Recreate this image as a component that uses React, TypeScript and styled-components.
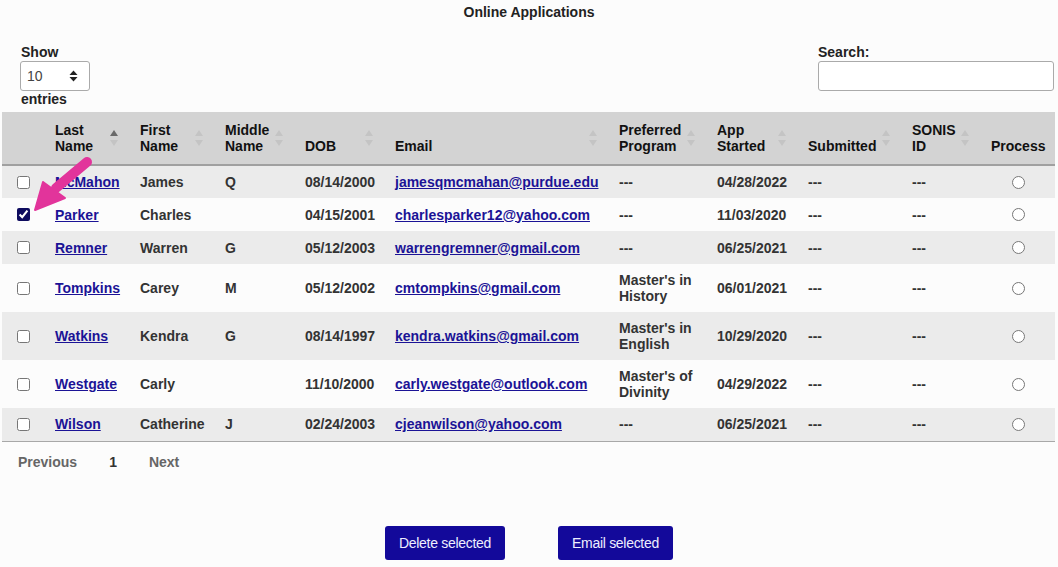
import React from "react";
import styled, { createGlobalStyle } from "styled-components";

const GlobalStyle = createGlobalStyle`
  html, body {
    margin: 0;
    padding: 0;
    background: #fcfcfc;
  }
  body {
    font-family: "Liberation Sans", Arial, sans-serif;
    font-size: 14px;
    color: #333;
  }
`;

type Applicant = {
  last: string
  first: string
  middle: string
  dob: string
  email: string
  program: string[]
  started: string
  checked?: boolean
}

const applicants: Applicant[] = [
  { last: "McMahon", first: "James", middle: "Q", dob: "08/14/2000", email: "jamesqmcmahan@purdue.edu", program: ["---"], started: "04/28/2022" },
  { last: "Parker", first: "Charles", middle: "", dob: "04/15/2001", email: "charlesparker12@yahoo.com", program: ["---"], started: "11/03/2020", checked: true },
  { last: "Remner", first: "Warren", middle: "G", dob: "05/12/2003", email: "warrengremner@gmail.com", program: ["---"], started: "06/25/2021" },
  { last: "Tompkins", first: "Carey", middle: "M", dob: "05/12/2002", email: "cmtompkins@gmail.com", program: ["Master's in", "History"], started: "06/01/2021" },
  { last: "Watkins", first: "Kendra", middle: "G", dob: "08/14/1997", email: "kendra.watkins@gmail.com", program: ["Master's in", "English"], started: "10/29/2020" },
  { last: "Westgate", first: "Carly", middle: "", dob: "11/10/2000", email: "carly.westgate@outlook.com", program: ["Master's of", "Divinity"], started: "04/29/2022" },
  { last: "Wilson", first: "Catherine", middle: "J", dob: "02/24/2003", email: "cjeanwilson@yahoo.com", program: ["---"], started: "06/25/2021" },
];

type Column = {
  label: string[]
  width: number
  sortable: boolean
  active?: boolean
  center?: boolean
}

const columns: Column[] = [
  { label: [""], width: 43, sortable: false, center: true },
  { label: ["Last", "Name"], width: 85, sortable: true, active: true },
  { label: ["First", "Name"], width: 85, sortable: true },
  { label: ["Middle", "Name"], width: 80, sortable: true },
  { label: ["DOB"], width: 90, sortable: true },
  { label: ["Email"], width: 224, sortable: true },
  { label: ["Preferred", "Program"], width: 98, sortable: true },
  { label: ["App", "Started"], width: 91, sortable: true },
  { label: ["Submitted"], width: 104, sortable: true },
  { label: ["SONIS", "ID"], width: 79, sortable: true },
  { label: ["Process"], width: 74, sortable: false, center: true },
];

const Lines: React.FC<{ lines: string[] }> = ({ lines }) => (
  <>
    {lines.map((l, j) => (
      <React.Fragment key={j}>
        {j > 0 && <br />}
        {l}
      </React.Fragment>
    ))}
  </>
);

export default function App() {
  return (
    <Page>
      <GlobalStyle />
      <Title>Online Applications</Title>

      <Controls>
        <LengthBlock>
          <Label>Show</Label>
          <SelectBox>
            <span>10</span>
            <svg width="9" height="12" viewBox="0 0 9 12">
              <path d="M4.5 0.5 L8.5 5 H0.5 Z" fill="#222" />
              <path d="M4.5 11.5 L8.5 7 H0.5 Z" fill="#222" />
            </svg>
          </SelectBox>
          <Label>entries</Label>
        </LengthBlock>
        <SearchBlock>
          <Label>Search:</Label>
          <SearchInput type="text" />
        </SearchBlock>
      </Controls>

      <Table>
        <colgroup>
          {columns.map((c, i) => (
            <col key={i} style={{ width: c.width }} />
          ))}
        </colgroup>
        <thead>
          <tr>
            {columns.map((c, i) => (
              <HeadCell key={i} $center={c.center}>
                <Lines lines={c.label} />
                {c.sortable && (
                  <SortIcon>
                    <SortUp $active={c.active} />
                    <SortDown />
                  </SortIcon>
                )}
              </HeadCell>
            ))}
          </tr>
        </thead>
        <tbody>
          {applicants.map((a, i) => (
            <Row key={a.last} $striped={i % 2 === 0}>
              <Cell $center>
                <Check type="checkbox" defaultChecked={a.checked} />
              </Cell>
              <Cell><NameLink href="#">{a.last}</NameLink></Cell>
              <Cell>{a.first}</Cell>
              <Cell>{a.middle}</Cell>
              <Cell>{a.dob}</Cell>
              <Cell><NameLink href="#">{a.email}</NameLink></Cell>
              <Cell><Lines lines={a.program} /></Cell>
              <Cell>{a.started}</Cell>
              <Cell>---</Cell>
              <Cell>---</Cell>
              <Cell $center>
                <Radio type="radio" name={`process-${i}`} />
              </Cell>
            </Row>
          ))}
        </tbody>
      </Table>

      <Pager>
        <PageButton $disabled>Previous</PageButton>
        <PageButton>1</PageButton>
        <PageButton $disabled>Next</PageButton>
      </Pager>

      <Actions>
        <ActionButton $width={120}>Delete selected</ActionButton>
        <ActionButton $width={115}>Email selected</ActionButton>
      </Actions>

      <Pointer width="90" height="80" viewBox="0 0 90 80">
        <line x1="77" y1="12" x2="46" y2="38" stroke="#e2349b" strokeWidth="10" strokeLinecap="round" />
        <polygon points="25,60 33,32 55,48" fill="#e2349b" stroke="#e2349b" strokeWidth="2" strokeLinejoin="round" />
      </Pointer>
    </Page>
  );
}

const Page = styled.div`
  position: relative;
  width: 1058px;
  height: 567px;
  padding-top: 4px;
  box-sizing: border-box;
  overflow: hidden;
`

const Title = styled.div`
  text-align: center;
  font-weight: bold;
  line-height: 16px;
  color: #222;
`

const Controls = styled.div`
  display: flex;
  justify-content: space-between;
  align-items: flex-start;
  margin-top: 24px;
  padding: 0 4px 0 20px;
`

const LengthBlock = styled.div`
  display: flex;
  flex-direction: column;
  align-items: flex-start;
`

const SearchBlock = styled.div`
  display: flex;
  flex-direction: column;
  align-items: flex-start;
`

const Label = styled.label`
  font-weight: bold;
  line-height: 16px;
  color: #222;
  padding-left: 1px;
`

const SelectBox = styled.div`
  display: flex;
  align-items: center;
  justify-content: space-between;
  width: 70px;
  height: 30px;
  margin-top: 1px;
  padding: 0 11px 0 6px;
  box-sizing: border-box;
  border: 1px solid #aaa;
  border-radius: 3px;
  background: #fff;
  color: #444;
  font-size: 14px;
`

const SearchInput = styled.input`
  width: 236px;
  height: 30px;
  margin: 1px 0 0 1px;
  box-sizing: border-box;
  border: 1px solid #aaa;
  border-radius: 3px;
  background: #fff;
  outline: none;
`

const Table = styled.table`
  width: 1053px;
  margin: 5px 2px 0;
  border-collapse: collapse;
  table-layout: fixed;
  border-bottom: 1px solid #a8a8a8;
`

const HeadCell = styled.th<{ $center?: boolean }>`
  position: relative;
  padding: 10px 10px;
  background: #d3d3d3;
  border-bottom: 2px solid #a0a0a0;
  color: #111;
  font-weight: bold;
  line-height: 16px;
  text-align: ${(p) => (p.$center ? "center" : "left")};
  vertical-align: bottom;
  white-space: nowrap;
`

const SortIcon = styled.span`
  position: absolute;
  right: 12px;
  top: 18px;
  display: flex;
  flex-direction: column;
  gap: 4px;
`

const SortUp = styled.span<{ $active?: boolean }>`
  width: 0;
  height: 0;
  border-left: 4px solid transparent;
  border-right: 4px solid transparent;
  border-bottom: 6px solid ${(p) => (p.$active ? "#6a6a6a" : "#c4c4c4")};
`

const SortDown = styled.span`
  width: 0;
  height: 0;
  border-left: 4px solid transparent;
  border-right: 4px solid transparent;
  border-top: 6px solid #c4c4c4;
`

const Row = styled.tr<{ $striped: boolean }>`
  height: 33px;
  background: ${(p) => (p.$striped ? "#ebebeb" : "#fcfcfc")};
`

const Cell = styled.td<{ $center?: boolean }>`
  padding: 8px 10px;
  line-height: 16px;
  font-weight: bold;
  color: #333;
  text-align: ${(p) => (p.$center ? "center" : "left")};
  vertical-align: middle;
  white-space: nowrap;
`

const NameLink = styled.a`
  color: #1b1396;
  text-decoration: underline;
`

const Check = styled.input`
  display: block;
  width: 13px;
  height: 13px;
  margin: 0 auto;
  accent-color: #0e0b5e;
`

const Radio = styled.input`
  display: block;
  width: 13px;
  height: 13px;
  margin: 0 auto;
`

const Pager = styled.div`
  display: flex;
  margin: 12px 0 0 2px;
`

const PageButton = styled.span<{ $disabled?: boolean }>`
  padding: 0 16px;
  line-height: 16px;
  font-weight: bold;
  color: ${(p) => (p.$disabled ? "#666" : "#333")};
`

const Actions = styled.div`
  display: flex;
  justify-content: center;
  gap: 53px;
  margin-top: 56px;
`

const ActionButton = styled.button<{ $width: number }>`
  width: ${(p) => p.$width}px;
  height: 34px;
  padding: 0;
  border: none;
  border-radius: 3px;
  background: #13099a;
  color: #eef;
  font-family: "Liberation Sans", Arial, sans-serif;
  font-size: 14px;
  letter-spacing: -0.3px;
`

const Pointer = styled.svg`
  position: absolute;
  left: 10px;
  top: 150px;
  pointer-events: none;
`
